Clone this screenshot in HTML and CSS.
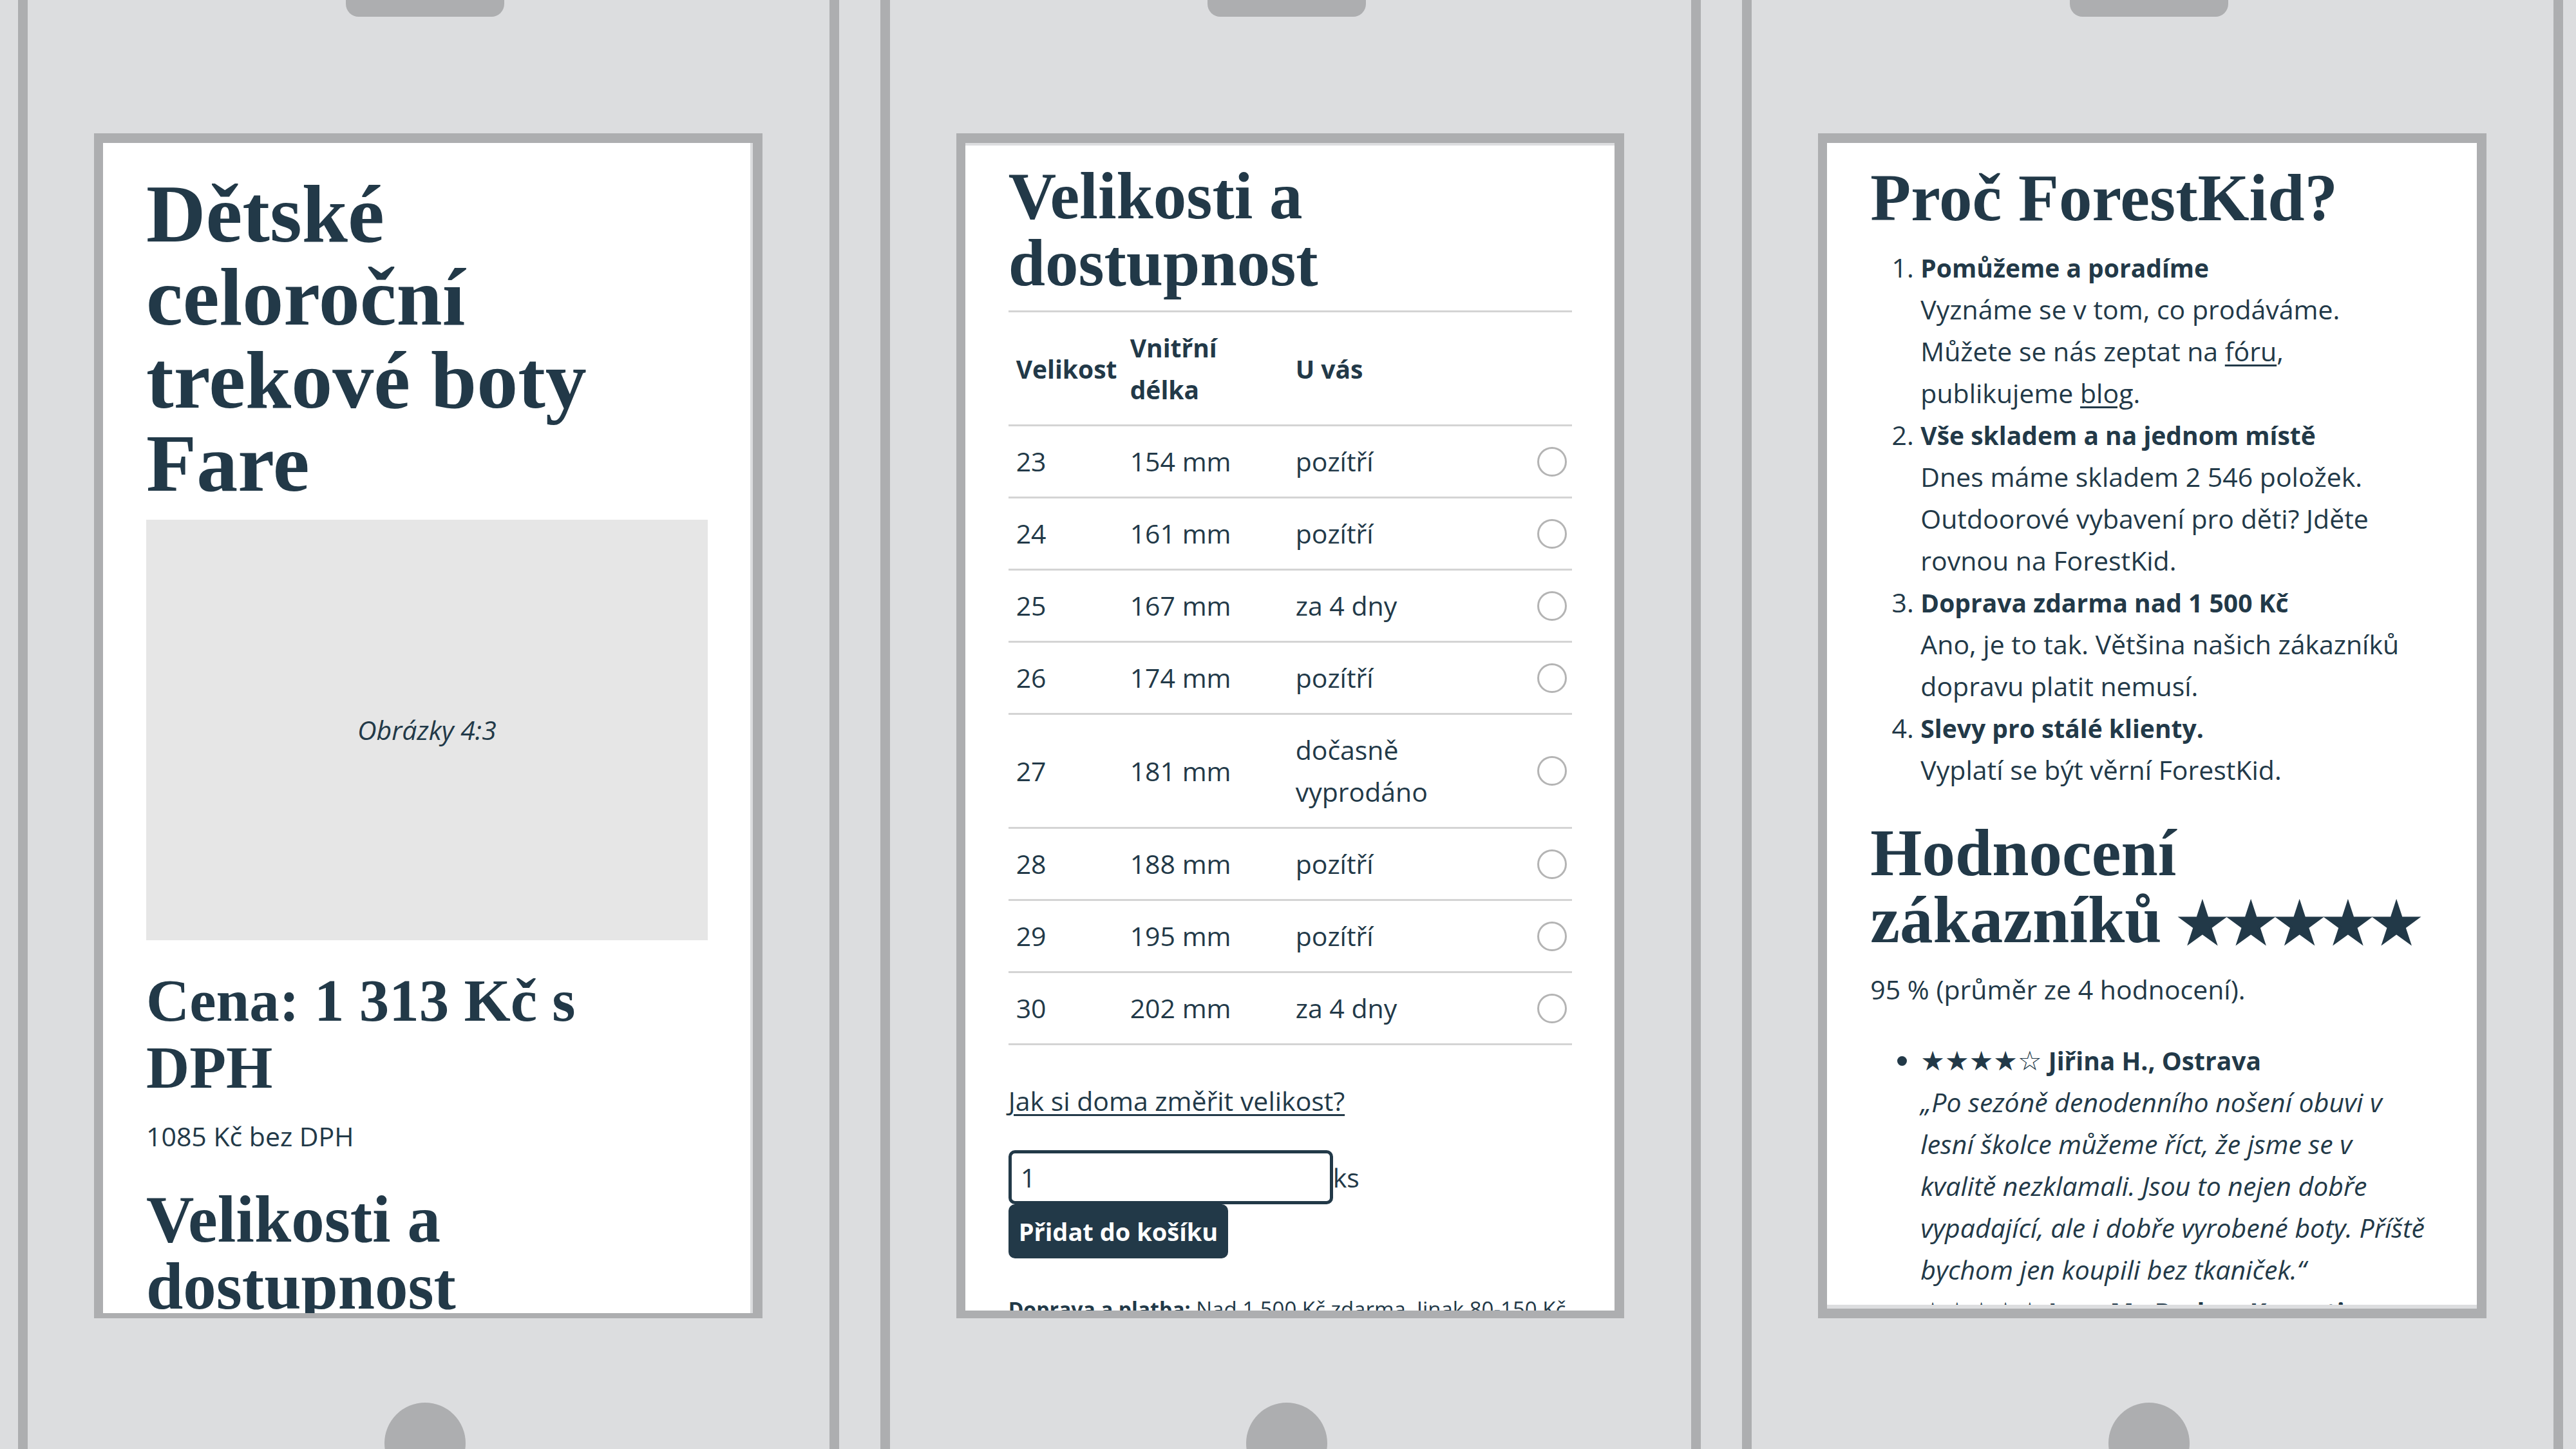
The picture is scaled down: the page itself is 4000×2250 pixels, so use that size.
FILE: index.html
```html
<!DOCTYPE html>
<html lang="cs">
<head>
<meta charset="utf-8">
<title>ForestKid</title>
<link rel="stylesheet" href="styles.css">
</head>
<body>
<main class="stage">
  <section class="phone">
    <div class="speaker"></div>
    <div class="screen screen-detail">
      <div class="page">
        <h1>Dětské<br>celoroční<br>trekové boty<br>Fare</h1>
        <div class="placeholder"><em>Obrázky 4:3</em></div>
        <h2 class="price">Cena: 1 313 Kč s<br>DPH</h2>
        <p class="net-price">1085 Kč bez DPH</p>
        <h2>Velikosti a<br>dostupnost</h2>
      </div>
    </div>
    <div class="home"></div>
  </section>

  <section class="phone">
    <div class="speaker"></div>
    <div class="screen screen-sizes">
      <div class="page">
        <h2>Velikosti a<br>dostupnost</h2>
        <table class="sizes">
          <colgroup><col class="col-size"><col class="col-length"><col class="col-stock"><col class="col-pick"></colgroup>
          <thead>
            <tr><th>Velikost</th><th>Vnitřní<br>délka</th><th>U vás</th><th></th></tr>
          </thead>
          <tbody>
            <tr><td>23</td><td>154 mm</td><td>pozítří</td><td><input type="radio" name="size" aria-label="Velikost 23"></td></tr>
            <tr><td>24</td><td>161 mm</td><td>pozítří</td><td><input type="radio" name="size" aria-label="Velikost 24"></td></tr>
            <tr><td>25</td><td>167 mm</td><td>za 4 dny</td><td><input type="radio" name="size" aria-label="Velikost 25"></td></tr>
            <tr><td>26</td><td>174 mm</td><td>pozítří</td><td><input type="radio" name="size" aria-label="Velikost 26"></td></tr>
            <tr><td>27</td><td>181 mm</td><td>dočasně<br>vyprodáno</td><td><input type="radio" name="size" aria-label="Velikost 27"></td></tr>
            <tr><td>28</td><td>188 mm</td><td>pozítří</td><td><input type="radio" name="size" aria-label="Velikost 28"></td></tr>
            <tr><td>29</td><td>195 mm</td><td>pozítří</td><td><input type="radio" name="size" aria-label="Velikost 29"></td></tr>
            <tr><td>30</td><td>202 mm</td><td>za 4 dny</td><td><input type="radio" name="size" aria-label="Velikost 30"></td></tr>
          </tbody>
        </table>
        <p class="measure"><a href="#mereni">Jak si doma změřit velikost?</a></p>
        <form class="order">
          <div class="quantity"><input class="field" type="text" id="qty" value="1"><label for="qty">ks</label></div>
          <button class="add" type="button">Přidat do košíku</button>
        </form>
        <p class="shipping"><strong>Doprava a platba:</strong> Nad 1 500 Kč zdarma. Jinak 80-150 Kč</p>
      </div>
    </div>
    <div class="home"></div>
  </section>

  <section class="phone">
    <div class="speaker"></div>
    <div class="screen screen-reviews">
      <div class="page">
        <h2>Proč ForestKid?</h2>
        <ol class="reasons">
          <li><strong>Pomůžeme a poradíme</strong><br>Vyznáme se v tom, co prodáváme.<br>Můžete se nás zeptat na <a href="#forum">fóru</a>,<br>publikujeme <a href="#blog">blog</a>.</li>
          <li><strong>Vše skladem a na jednom místě</strong><br>Dnes máme skladem 2 546 položek.<br>Outdoorové vybavení pro děti? Jděte<br>rovnou na ForestKid.</li>
          <li><strong>Doprava zdarma nad 1 500 Kč</strong><br>Ano, je to tak. Většina našich zákazníků<br>dopravu platit nemusí.</li>
          <li><strong>Slevy pro stálé klienty.</strong><br>Vyplatí se být věrní ForestKid.</li>
        </ol>
        <h2>Hodnocení<br>zákazníků <span class="stars">★★★★★</span></h2>
        <p class="average">95 % (průměr ze 4 hodnocení).</p>
        <ul class="reviews">
          <li><strong><span class="stars">★★★★☆</span> Jiřina H., Ostrava</strong><br><em>„Po sezóně denodenního nošení obuvi v<br>lesní školce můžeme říct, že jsme se v<br>kvalitě nezklamali. Jsou to nejen dobře<br>vypadající, ale i dobře vyrobené boty. Příště<br>bychom jen koupili bez tkaniček.“</em></li>
          <li><strong><span class="stars">★★★★★</span> Jana M., Praha - Kunratice</strong></li>
        </ul>
      </div>
    </div>
    <div class="home"></div>
  </section>
</main>
</body>
</html>
```

FILE: styles.css
```css
:root {
  --ink: #223948;
  --frame: #adaeb0;
  --shell: #dcdddf;
  --line: #d4d4d4;
}

* { box-sizing: border-box; }

body {
  margin: 0;
  background: var(--shell);
  color: var(--ink);
  font: 41px/65px "Open Sans", "Noto Sans", sans-serif;
}

.stage {
  display: grid;
  grid-template-columns: repeat(3, minmax(0, 1fr));
  gap: 64px;
  height: 100vh;
  padding: 0 20px 0 28px;
  overflow: hidden;
}

.phone {
  display: flex;
  flex-direction: column;
  align-items: center;
  padding: 0 104px 0 103px;
  border: solid var(--frame);
  border-width: 0 15px;
}

.speaker {
  flex: none;
  width: 246px;
  height: 26px;
  margin: 0 10px 181px 0;
  border-radius: 0 0 20px 20px;
  background: var(--frame);
}

.screen {
  flex: none;
  width: 100%;
  height: 1840px;
  border: 15px solid var(--frame);
  border-left-width: 14px;
  background: #fff;
}

.page {
  height: 100%;
  padding: 0 66px 0 67px;
  border: 0 solid var(--shell);
  overflow: hidden;
}

.home {
  flex: none;
  width: 126px;
  height: 126px;
  margin: 131px 10px 0 0;
  border-radius: 50%;
  background: var(--frame);
}

h1, h2 {
  margin: 0;
  font-family: "Liberation Serif", serif;
  font-weight: 700;
  white-space: nowrap;
}

h1 { font-size: 128px; line-height: 129px; }
h2 { font-size: 103px; line-height: 104px; }
.price { font-size: 93px; }
p { margin: 0; white-space: nowrap; }
strong, th { font-size: 39px; }
a { color: inherit; text-decoration-thickness: 3px; text-underline-offset: 5px; }

.stars { font-family: "DejaVu Sans", sans-serif; line-height: 1; }
h2 .stars { font-size: 84px; font-weight: 400; -webkit-text-stroke: 4px var(--ink); }
li .stars { font-size: 42px; }

.screen-detail { border-bottom-width: 8px; }
.screen-detail .page { padding-top: 46px; border-right-width: 4px; }

.placeholder {
  display: flex;
  align-items: center;
  justify-content: center;
  height: 653px;
  margin: 23px 0 42px;
  background: #e6e6e6;
}

.net-price { margin: 22px 0 44px; }

.screen-sizes { border-bottom-width: 12px; }
.screen-sizes .page { padding-top: 26px; border-top-width: 4px; }

.sizes {
  width: 100%;
  margin-top: 22px;
  border-collapse: collapse;
  table-layout: fixed;
  white-space: nowrap;
}

.col-size { width: 177px; }
.col-length { width: 257px; }
.col-pick { width: 70px; }

.sizes tr { border-top: 3px solid var(--line); }
.sizes tbody tr:last-child { border-bottom: 3px solid var(--line); }
.sizes th, .sizes td { padding: 22px 12px; text-align: left; }
.sizes td:last-child { padding: 0 8px; text-align: right; }

.sizes input {
  appearance: none;
  display: block;
  width: 46px;
  height: 46px;
  margin: 0 0 0 auto;
  border: 3px solid #b4b4b4;
  border-radius: 50%;
  background: #fff;
}

.measure { margin: 54px 0 44px; }
.quantity { display: flex; align-items: center; }

.field {
  width: 504px;
  height: 84px;
  padding: 0 14px;
  border: 5px solid var(--ink);
  border-radius: 10px;
  background: #fff;
  color: inherit;
  font: inherit;
}

.add {
  display: block;
  height: 84px;
  padding: 0 16px;
  border: 0;
  border-radius: 10px;
  background: var(--ink);
  color: #fff;
  font: inherit;
  font-size: 38px;
  font-weight: 700;
}

.shipping { margin-top: 46px; font-size: 33px; }
.shipping strong { font-size: 32px; }

.screen-reviews .page { padding-top: 33px; border-bottom-width: 6px; }
.reasons, .reviews { margin: 0; padding-left: 78px; white-space: nowrap; }
.reasons { margin: 24px 0 44px; }
.average { margin: 24px 0 45px; }
```
